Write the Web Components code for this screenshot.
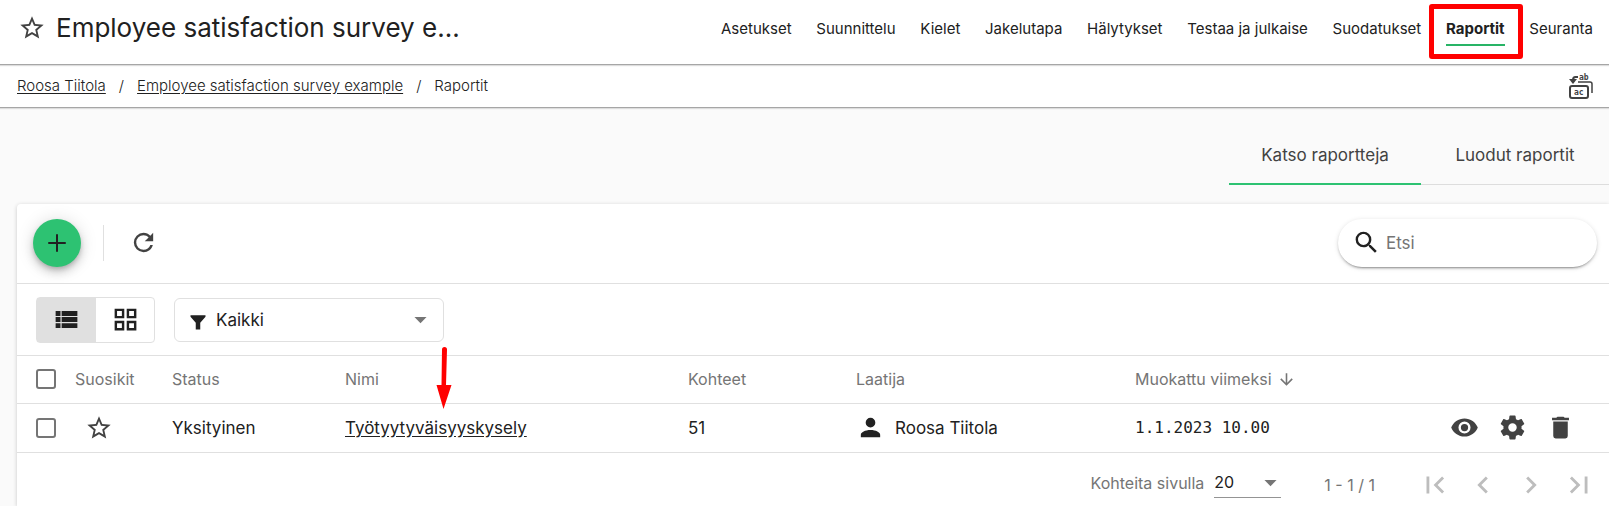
<!DOCTYPE html>
<html lang="fi">
<head>
<meta charset="utf-8">
<meta name="viewport" content="width=device-width, initial-scale=1">
<title>Raportit</title>
<style>
  body { margin: 0; background: #fafafa; color: #212121; font: 400 17px/24px Inter, "Liberation Sans", sans-serif; }
</style>
</head>
<body>
<report-page></report-page>
<script>
const ICONS = {
  star: 'M12 15.39L8.24 17.66L9.23 13.38L5.91 10.5L10.29 10.13L12 6.09L13.71 10.13L18.09 10.5L14.77 13.38L15.76 17.66M22 9.24L14.81 8.63L12 2L9.19 8.63L2 9.24L7.45 13.97L5.82 21L12 17.27L18.18 21L16.54 13.97L22 9.24Z',
  plus: 'M19 12.8H12.8V19H11.2V12.8H5V11.2H11.2V5H12.8V11.2H19Z',
  refresh: 'M17.65 6.35C16.2 4.9 14.21 4 12 4A8 8 0 0 0 4 12A8 8 0 0 0 12 20C15.73 20 18.84 17.45 19.73 14H17.65C16.83 16.33 14.61 18 12 18A6 6 0 0 1 6 12A6 6 0 0 1 12 6C13.66 6 15.14 6.69 16.22 7.78L13 11H20V4L17.65 6.35Z',
  search: 'M9.5 3A6.5 6.5 0 0 1 16 9.5C16 11.11 15.41 12.59 14.44 13.73L14.71 14H15.5L20.5 19L19 20.5L14 15.5V14.71L13.73 14.44C12.59 15.41 11.11 16 9.5 16A6.5 6.5 0 0 1 3 9.5A6.5 6.5 0 0 1 9.5 3M9.5 5C7 5 5 7 5 9.5C5 12 7 14 9.5 14C12 14 14 12 14 9.5C14 7 12 5 9.5 5Z',
  list: 'M3 14h4v-4H3v4zm0 5h4v-4H3v4zM3 9h4V5H3v4zm5 5h13v-4H8v4zm0 5h13v-4H8v4zM8 5v4h13V5H8z',
  grid: 'M3 11V3H11V11H3M3 21V13H11V21H3M13 11V3H21V11H13M13 21V13H21V21H13M5 5V9H9V5H5M5 15V19H9V15H5M15 5V9H19V5H15M15 15V19H19V15H15Z',
  filter: 'M2 3H22V5L15 13V22H9V13L2 5Z',
  caret: 'M7 10L12 15L17 10H7Z',
  down: 'M11 4H13V16L18.5 10.5L19.92 11.92L12 19.84L4.08 11.92L5.5 10.5L11 16V4Z',
  person: 'M12 4A4 4 0 0 1 16 8A4 4 0 0 1 12 12A4 4 0 0 1 8 8A4 4 0 0 1 12 4M12 14C16.42 14 20 15.79 20 18V20H4V18C4 15.79 7.58 14 12 14Z',
  eye: 'M12 9A3 3 0 0 0 9 12A3 3 0 0 0 12 15A3 3 0 0 0 15 12A3 3 0 0 0 12 9M12 17A5 5 0 0 1 7 12A5 5 0 0 1 12 7A5 5 0 0 1 17 12A5 5 0 0 1 12 17M12 4.5C7 4.5 2.73 7.61 1 12C2.73 16.39 7 19.5 12 19.5C17 19.5 21.27 16.39 23 12C21.27 7.61 17 4.5 12 4.5Z',
  cog: 'M12 15.5A3.5 3.5 0 0 1 8.5 12A3.5 3.5 0 0 1 12 8.5A3.5 3.5 0 0 1 15.5 12A3.5 3.5 0 0 1 12 15.5M19.43 12.97C19.47 12.65 19.5 12.33 19.5 12C19.5 11.67 19.47 11.34 19.43 11L21.54 9.37C21.73 9.22 21.78 8.95 21.66 8.73L19.66 5.27C19.54 5.05 19.27 4.96 19.05 5.05L16.56 6.05C16.04 5.66 15.5 5.32 14.87 5.07L14.5 2.42C14.46 2.18 14.25 2 14 2H10C9.75 2 9.54 2.18 9.5 2.42L9.13 5.07C8.5 5.32 7.96 5.66 7.44 6.05L4.95 5.05C4.73 4.96 4.46 5.05 4.34 5.27L2.34 8.73C2.21 8.95 2.27 9.22 2.46 9.37L4.57 11C4.53 11.34 4.5 11.67 4.5 12C4.5 12.33 4.53 12.65 4.57 12.97L2.46 14.63C2.27 14.78 2.21 15.05 2.34 15.27L4.34 18.73C4.46 18.95 4.73 19.03 4.95 18.95L7.44 17.94C7.96 18.34 8.5 18.68 9.13 18.93L9.5 21.58C9.54 21.82 9.75 22 10 22H14C14.25 22 14.46 21.82 14.5 21.58L14.87 18.93C15.5 18.67 16.04 18.34 16.56 17.94L19.05 18.95C19.27 19.03 19.54 18.95 19.66 18.73L21.66 15.27C21.78 15.05 21.73 14.78 21.54 14.63L19.43 12.97Z',
  trash: 'M19 4H15.5L14.5 3H9.5L8.5 4H5V6H19M6 19A2 2 0 0 0 8 21H16A2 2 0 0 0 18 19V7H6V19Z',
  first: 'M18.41 16.59L13.82 12L18.41 7.41L17 6L11 12L17 18L18.41 16.59M6 6H8V18H6V6Z',
  prev: 'M15.41 16.58L10.83 12L15.41 7.41L14 6L8 12L14 18L15.41 16.58Z',
  next: 'M8.59 16.58L13.17 12L8.59 7.41L10 6L16 12L10 18L8.59 16.58Z',
  last: 'M5.59 7.41L10.18 12L5.59 16.59L7 18L13 12L7 6L5.59 7.41M16 6H18V18H16V6Z'
};

const define = (name, html) => customElements.define(name, class extends HTMLElement {
  constructor() {
    super();
    const t = document.createElement('template');
    t.innerHTML = '<style>*{box-sizing:border-box}button,input,select{font:inherit;color:inherit;margin:0}button{border:0;padding:0;background:none;display:flex;align-items:center;justify-content:center;cursor:pointer}a{color:inherit}</style>' + html;
    this.attachShadow({ mode: 'open' }).append(t.content.cloneNode(true));
  }
});

customElements.define('ui-icon', class extends HTMLElement {
  connectedCallback() {
    if (this.shadowRoot) return;
    this.attachShadow({ mode: 'open' }).innerHTML = `
      <style>
        :host { display: block; flex: none; width: var(--icon-size, 29px); height: var(--icon-size, 29px); }
        svg { display: block; width: 100%; height: 100%; fill: currentColor; }
      </style>
      <svg viewBox="0 0 24 24" aria-hidden="true"><path fill-rule="evenodd" d="${ICONS[this.getAttribute('name')]}"/></svg>`;
  }
});

customElements.define('nav-item', class extends HTMLElement {
  connectedCallback() {
    if (this.shadowRoot) return;
    this.attachShadow({ mode: 'open' }).innerHTML = `
      <style>
        :host { display: block; position: relative; }
        a { display: block; padding: 8px 0 5px; border-bottom: 2px solid transparent; color: inherit; text-decoration: none; font-size: 15px; line-height: 20px; white-space: nowrap; }
        :host([current]) a { font-weight: 700; border-color: #28b466; }
        .mark { display: none; }
        :host([marked]) .mark { display: block; position: absolute; inset: -7px -18px -13px -17px; border: 5px solid #f00; border-radius: 3px; pointer-events: none; }
      </style>
      <a href="#"><slot></slot></a><span class="mark"></span>`;
  }
});

define('app-header', `
  <style>
    :host { display: flex; align-items: center; justify-content: space-between; min-height: 65px; padding: 0 16px 0 18px; background: #fff; border-bottom: 1px solid #a6a6a6; box-shadow: 0 1px 1px #ddd; position: relative; box-sizing: border-box; }
    .title { display: flex; align-items: center; gap: 10px; margin-bottom: 9px; }
    button { --icon-size: 28px; color: #424242; }
    h1 { margin: 0; font-size: 26px; line-height: 32px; font-weight: 400; white-space: nowrap; }
    nav { display: flex; justify-content: space-between; flex: 0 1 872px; margin-bottom: 7px; }
  </style>
  <div class="title"><button aria-label="Suosikki"><ui-icon name="star"></ui-icon></button><h1>Employee satisfaction survey e...</h1></div>
  <nav>
    <nav-item>Asetukset</nav-item><nav-item>Suunnittelu</nav-item><nav-item>Kielet</nav-item>
    <nav-item>Jakelutapa</nav-item><nav-item>Hälytykset</nav-item><nav-item>Testaa ja julkaise</nav-item>
    <nav-item>Suodatukset</nav-item><nav-item current marked>Raportit</nav-item><nav-item>Seuranta</nav-item>
  </nav>`);

define('crumb-bar', `
  <style>
    :host { display: flex; align-items: center; justify-content: space-between; height: 43px; padding: 0 16px 0 17px; box-sizing: border-box; background: #fff; border-bottom: 1px solid #a6a6a6; box-shadow: 0 1px 1px #ddd; font-size: 15px; line-height: 20px; font-weight: 300; }
    nav { display: flex; gap: 13px; }
    a { text-underline-offset: 2px; }
    svg { display: block; fill: none; stroke: #424242; stroke-width: 2; }
    text { fill: #424242; stroke: none; font: 700 8px "DejaVu Sans Mono", monospace; }
  </style>
  <nav aria-label="Polku"><a href="#">Roosa Tiitola</a><span>/</span><a href="#">Employee satisfaction survey example</a><span>/</span><span>Raportit</span></nav>
  <button aria-label="Vaihda kieli">
    <svg width="24" height="26" viewBox="0 0 24 26"><path d="M9 4H6.500Q4 4 4 7"/><path d="M0 6H8L4 11Z" fill="#424242" stroke="none"/><path d="M9 9H21Q23 9 23 11V20" stroke-width="1.500"/><rect x="1" y="13" width="18" height="12" rx="2"/><text x="10" y="7">ab</text><text x="5" y="22">ac</text></svg>
  </button>`);

define('report-tabs', `
  <style>
    :host { display: flex; justify-content: flex-end; padding-top: 16px; }
    div { display: flex; border-bottom: 1px solid #ddd; }
    button { width: 188px; height: 61px; padding-top: 2px; color: #424242; border-bottom: 2px solid transparent; margin-bottom: -1px; }
    button[aria-selected=true] { width: 192px; border-color: #2dc272; }
  </style>
  <div role="tablist"><button role="tab" aria-selected="true">Katso raportteja</button><button role="tab" aria-selected="false">Luodut raportit</button></div>`);

define('report-toolbar', `
  <style>
    :host { display: flex; align-items: center; height: 80px; padding: 0 12px 2px 16px; box-sizing: border-box; border-bottom: 1px solid #e0e0e0; }
    .add { width: 48px; height: 48px; border-radius: 50%; background: #2dc272; --icon-size: 30px; box-shadow: 0 3px 5px -1px #0003, 0 6px 10px #0002, 0 1px 18px #0002; }
    hr { width: 1px; height: 36px; margin: 0 25px 0 22px; border: 0; background: #e0e0e0; }
    .refresh { color: #424242; }
    label { display: flex; align-items: center; gap: 5px; width: 259px; height: 48px; margin-left: auto; padding: 0 16px 0 14px; border-radius: 24px; box-shadow: 0 3px 1px -2px #0003, 0 2px 2px #0002, 0 1px 5px #0002; }
    input { min-width: 0; flex: 1; border: 0; padding: 0; outline: 0; background: none; }
    input::placeholder { color: #757575; opacity: 1; }
  </style>
  <button class="add" aria-label="Lisää"><ui-icon name="plus"></ui-icon></button><hr>
  <button class="refresh" aria-label="Päivitä"><ui-icon name="refresh"></ui-icon></button>
  <label><ui-icon name="search"></ui-icon><input type="text" placeholder="Etsi" aria-label="Etsi"></label>`);

define('report-filters', `
  <style>
    :host { display: flex; align-items: center; gap: 19px; height: 72px; padding: 0 19px; box-sizing: border-box; border-bottom: 1px solid #e0e0e0; }
    .views { display: flex; border: 1px solid #e0e0e0; border-radius: 4px; }
    .views button { width: 58px; height: 44px; }
    .views button[aria-pressed=true] { width: 59px; background: #e0e0e0; }
    label { display: grid; grid-template-columns: 15px 1fr 29px; align-items: center; width: 270px; height: 44px; padding-left: 14px; border: 1px solid #e0e0e0; border-radius: 6px; }
    label > * { grid-row: 1; }
    label ui-icon:first-child { --icon-size: 18px; grid-column: 1; margin-top: 4px; }
    select { grid-column: 1 / 4; width: 100%; height: 42px; appearance: none; border: 0; outline: 0; background: none; padding: 0 0 0 27px; }
    .caret { grid-column: 3; color: #757575; margin-left: -8px; pointer-events: none; }
  </style>
  <div class="views"><button aria-pressed="true" aria-label="Lista"><ui-icon name="list"></ui-icon></button><button aria-pressed="false" aria-label="Ruudukko"><ui-icon name="grid"></ui-icon></button></div>
  <label><ui-icon name="filter"></ui-icon><select aria-label="Suodatin"><option>Kaikki</option></select><ui-icon class="caret" name="caret"></ui-icon></label>`);

define('report-table', `
  <style>
    :host { display: block; }
    table { width: 100%; table-layout: fixed; border-collapse: collapse; }
    th, td { padding: 0; text-align: left; border-bottom: 1px solid #e0e0e0; white-space: nowrap; }
    th { height: 47px; font-size: 16px; line-height: 20px; font-weight: 400; color: #757575; }
    td { height: 49px; }
    td:first-child, th:first-child { padding-left: 19px; }
    input { display: block; width: 20px; height: 20px; appearance: none; border: 2px solid #757575; border-radius: 3px; }
    .fav { --icon-size: 28px; color: #424242; margin-left: 10px; }
    a { text-underline-offset: 2px; }
    .row { display: flex; align-items: center; gap: 10px; }
    .sort { --icon-size: 19px; gap: 5px; }
    .date { font: 16px/24px "DejaVu Sans Mono", monospace; }
    .actions { display: flex; justify-content: flex-end; padding-right: 25px; color: #424242; }
    .actions button { width: 48px; height: 48px; }
    .name { position: relative; }
    .arrow { position: absolute; left: 91px; top: -9px; fill: #f00; pointer-events: none; }
  </style>
  <table>
    <colgroup><col style="width:58px"><col style="width:97px"><col style="width:173px"><col style="width:343px"><col style="width:168px"><col style="width:279px"><col style="width:280px"><col style="width:194px"></colgroup>
    <thead><tr>
      <th><input type="checkbox" aria-label="Valitse kaikki"></th><th>Suosikit</th><th>Status</th>
      <th class="name">Nimi<svg class="arrow" width="16" height="62" viewBox="0 0 16 62" aria-hidden="true"><path d="M6 2.500Q6 0 8.500 0T11 2.500L10 38H15.500L7.500 62L.500 38H5.500Z"/></svg></th>
      <th>Kohteet</th><th>Laatija</th><th><div class="row sort">Muokattu viimeksi<ui-icon name="down"></ui-icon></div></th><th></th>
    </tr></thead>
    <tbody><tr>
      <td><input type="checkbox" aria-label="Valitse rivi"></td>
      <td><button class="fav" aria-label="Suosikki"><ui-icon name="star"></ui-icon></button></td>
      <td>Yksityinen</td><td><a href="#">Työtyytyväisyyskysely</a></td><td>51</td>
      <td><div class="row"><ui-icon name="person"></ui-icon>Roosa Tiitola</div></td>
      <td class="date">1.1.2023 10.00</td>
      <td><div class="actions"><button aria-label="Näytä"><ui-icon name="eye"></ui-icon></button><button aria-label="Asetukset"><ui-icon name="cog"></ui-icon></button><button aria-label="Poista"><ui-icon name="trash"></ui-icon></button></div></td>
    </tr></tbody>
  </table>`);

define('page-controls', `
  <style>
    :host { display: flex; align-items: center; justify-content: flex-end; padding: 14px 6px 2px; font-size: 16px; line-height: 20px; color: #757575; }
    label { display: flex; align-items: center; gap: 10px; margin-bottom: 4px; }
    .pick { display: grid; width: 67px; align-items: center; border-bottom: 1px solid #949494; }
    .pick > * { grid-area: 1 / 1; }
    select { height: 30px; width: 100%; appearance: none; border: 0; padding: 0; outline: 0; background: none; color: #212121; }
    .pick ui-icon { justify-self: end; margin-right: -4px; pointer-events: none; }
    .range { margin: 0 36px 0 43px; }
    .pages { display: flex; --icon-size: 34px; color: #bdbdbd; }
    .pages button { width: 48px; height: 36px; }
  </style>
  <label>Kohteita sivulla<span class="pick"><select><option>20</option></select><ui-icon name="caret"></ui-icon></span></label>
  <span class="range">1 - 1 / 1</span>
  <div class="pages"><button aria-label="Ensimmäinen"><ui-icon name="first"></ui-icon></button><button aria-label="Edellinen"><ui-icon name="prev"></ui-icon></button><button aria-label="Seuraava"><ui-icon name="next"></ui-icon></button><button aria-label="Viimeinen"><ui-icon name="last"></ui-icon></button></div>`);

define('report-card', `
  <style>
    :host { display: block; flex: 1; margin: 19px 0 0 17px; background: #fff; border-radius: 4px 0 0 0; box-shadow: 0 1px 4px #0003; }
  </style>
  <slot></slot>`);

define('report-page', `
  <style>
    :host { display: flex; flex-direction: column; min-height: 100vh; overflow: hidden; }
  </style>
  <app-header></app-header>
  <crumb-bar></crumb-bar>
  <report-tabs></report-tabs>
  <report-card>
    <report-toolbar></report-toolbar>
    <report-filters></report-filters>
    <report-table></report-table>
    <page-controls></page-controls>
  </report-card>`);
</script>
</body>
</html>
